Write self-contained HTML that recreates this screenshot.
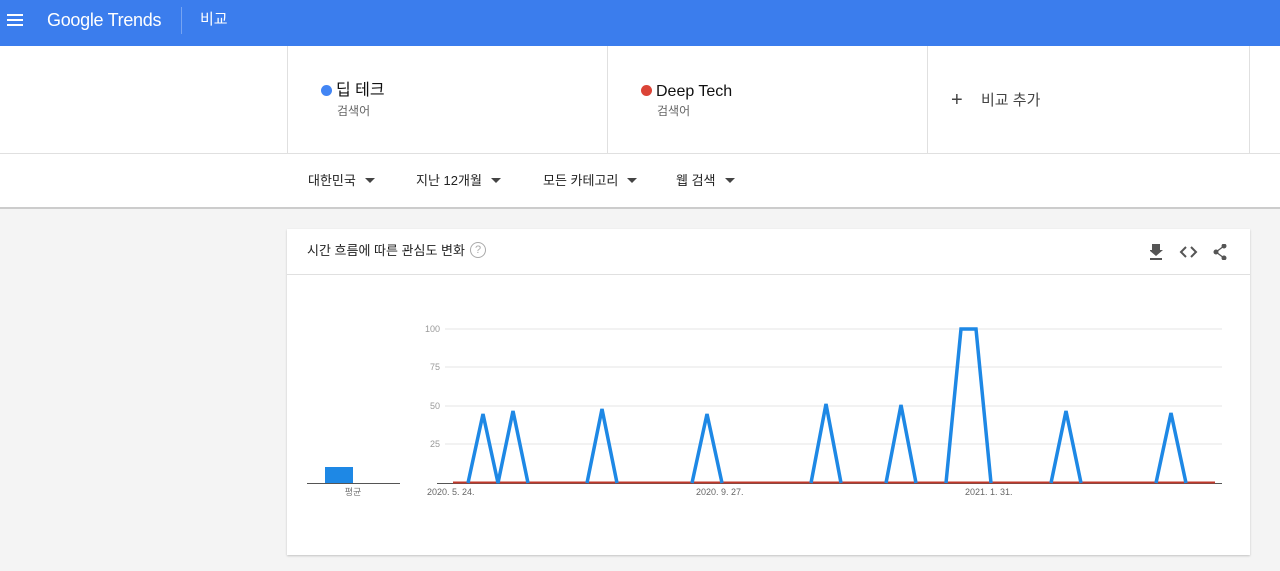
<!DOCTYPE html>
<html><head><meta charset="utf-8"><style>
body{margin:0;width:1280px;height:571px;background:#f4f4f4;font-family:"Liberation Sans","Noto Sans CJK KR",sans-serif;overflow:hidden;position:relative}
div{line-height:20px}
.top{position:absolute;left:0;top:0;width:1280px;height:46px;background:#3b7ded;box-shadow:0 1px 3px rgba(0,0,0,.3)}
.top .t{position:absolute;color:#fff}
.terms{position:absolute;top:46px;left:0;width:1280px;height:107px;background:#fff;border-bottom:1px solid #e0e0e0}
.term{position:absolute;top:0;height:107px;border-left:1px solid #e0e0e0}
.filters{position:absolute;top:154px;left:0;width:1280px;height:53px;background:#fff;border-bottom:2px solid #ccc}
.f{position:absolute;top:17px;font-size:13px;color:#222}
.f:after{content:"";display:inline-block;margin-left:9px;border:5px solid transparent;border-top-color:#444;border-bottom:0;vertical-align:2px}
.card{position:absolute;left:287px;top:229px;width:963px;height:326px;background:#fff;box-shadow:0 1px 2px rgba(0,0,0,.2)}
</style></head><body>
<div class="top">
<svg style="position:absolute;left:7px;top:14px" width="16" height="12"><rect y="0" width="16" height="2" fill="#fff"/><rect y="5" width="16" height="2" fill="#fff"/><rect y="10" width="16" height="2" fill="#fff"/></svg>
<div class="t" style="left:47px;top:10px;font-size:18px;letter-spacing:-0.3px">Google Trends</div>
<div style="position:absolute;left:181px;top:7px;width:1px;height:27px;background:rgba(255,255,255,.3)"></div>
<div class="t" style="left:200px;top:10px;font-size:15px">비교</div>
</div>
<div class="terms">
<div class="term" style="left:287px;width:320px"><div style="position:absolute;left:33px;top:39px;width:11px;height:11px;border-radius:50%;background:#4285f4"></div><div style="position:absolute;left:48px;top:35px;font-size:16px;color:#111">딥 테크</div><div style="position:absolute;left:49px;top:55px;font-size:12px;color:#666">검색어</div></div>
<div class="term" style="left:607px;width:320px"><div style="position:absolute;left:33px;top:39px;width:11px;height:11px;border-radius:50%;background:#db4437"></div><div style="position:absolute;left:48px;top:36px;font-size:16px;color:#111">Deep Tech</div><div style="position:absolute;left:49px;top:55px;font-size:12px;color:#666">검색어</div></div>
<div class="term" style="left:927px;width:321px;border-right:1px solid #e0e0e0"><div style="position:absolute;left:23px;top:46px;font-size:20px;color:#444;line-height:16px">+</div><div style="position:absolute;left:53px;top:45px;font-size:15px;color:#444">비교 추가</div></div>
</div>
<div class="filters">
<div class="f" style="left:308px">대한민국</div><div class="f" style="left:416px">지난 12개월</div><div class="f" style="left:543px">모든 카테고리</div><div class="f" style="left:676px">웹 검색</div>
</div>
<div class="card">
<div style="position:absolute;left:20px;top:12px;font-size:13px;color:#222">시간 흐름에 따른 관심도 변화</div>
<div style="position:absolute;left:183px;top:13px;width:14px;height:14px;border:1px solid #aaa;border-radius:50%;font-size:11px;color:#aaa;text-align:center;line-height:14px">?</div>
<div style="position:absolute;left:0;top:45px;width:963px;height:1px;background:#e0e0e0"></div>
<svg style="position:absolute;left:863px;top:15px" width="80" height="16" fill="#555"><path d="M2 0h8v6h3l-7 6-7-6h3zM0 14h12v2H0z"/><path d="M36 3l-5 5 5 5M41 3l5 5-5 5" stroke="#555" stroke-width="2" fill="none"/><circle cx="74" cy="2" r="2.5"/><circle cx="74" cy="14" r="2.5"/><circle cx="66" cy="8" r="2.5"/><path d="M74 2l-8 6 8 6" stroke="#555" fill="none" stroke-width="1.3"/></svg>
</div>
<svg style="position:absolute;left:0;top:0" width="1280" height="571">
<g stroke="#e6e6e6"><line x1="445" y1="329" x2="1222" y2="329"/><line x1="445" y1="367" x2="1222" y2="367"/><line x1="445" y1="406" x2="1222" y2="406"/><line x1="445" y1="444" x2="1222" y2="444"/></g>
<line x1="437" y1="483.5" x2="1222" y2="483.5" stroke="#555"/>
<g font-size="9" fill="#999" text-anchor="end" font-family="Liberation Sans"><text x="440" y="332">100</text><text x="440" y="370">75</text><text x="440" y="409">50</text><text x="440" y="447">25</text></g>
<g font-size="9" fill="#666" font-family="Liberation Sans"><text x="427" y="495">2020. 5. 24.</text><text x="696" y="495">2020. 9. 27.</text><text x="965" y="495">2021. 1. 31.</text></g>
<line x1="453" y1="482.5" x2="1215" y2="482.5" stroke="#c0392b" stroke-width="2"/>
<path fill="none" stroke="#1e88e5" stroke-width="3.5" d="M468,483 483,414 498,483 513,411 528,483 M587,483 602,409 617,483 M692,483 707,414 722,483 M811,483 826,404 841,483 M886,483 901,405 916,483 M946,483 961,329 976,329 991,483 M1051,483 1066,411 1081,483 M1156,483 1171,413 1186,483"/>
<rect x="325" y="467" width="28" height="16" fill="#1e88e5"/>
<line x1="307" y1="483.5" x2="400" y2="483.5" stroke="#555"/>
<text x="353" y="495" font-size="9" fill="#777" font-family="Liberation Sans,Noto Sans CJK KR" text-anchor="middle">평균</text>
</svg>
</body></html>
